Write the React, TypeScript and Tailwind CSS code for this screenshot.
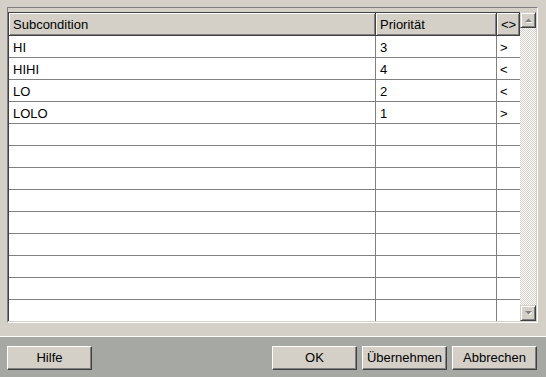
import React from "react";

const rows: [string, string, string][] = [
  ["HI", "3", ">"],
  ["HIHI", "4", "<"],
  ["LO", "2", "<"],
  ["LOLO", "1", ">"],
  ...Array.from({ length: 9 }, () => ["", "", ""] as [string, string, string]),
];

function ScrollButton({ down }: { down?: boolean }) {
  return (
    <div className="h-[16px] w-[16px] flex items-center justify-center bg-[#d4d0c8] border border-t-[#d4d0c8] border-l-[#d4d0c8] border-r-[#404040] border-b-[#404040] shadow-[inset_1px_1px_#ffffff,inset_-1px_-1px_#808080]">
      <svg width="7" height="5" viewBox="0 0 7 5">
        {down ? (
          <>
            <polygon points="1,1 8,1 4.5,4.5" fill="#ffffff" />
            <polygon points="0,0 7,0 3.5,3.5" fill="#808080" />
          </>
        ) : (
          <>
            <polygon points="1,5 8,5 4.5,1.5" fill="#ffffff" />
            <polygon points="0,4 7,4 3.5,0.5" fill="#808080" />
          </>
        )}
      </svg>
    </div>
  );
}

function Button({ label }: { label: string }) {
  return (
    <button className="h-[24px] w-[85px] bg-[#d4d0c8] border border-t-white border-l-white border-r-[#404040] border-b-[#404040] shadow-[inset_-1px_-1px_#808080] text-[13px] leading-[20px] text-black">
      {label}
    </button>
  );
}

export default function App() {
  return (
    <div className="w-[546px] h-[377px] bg-[#d4d0c8] flex flex-col font-['Liberation_Sans',Arial,sans-serif] text-[13px] text-black overflow-hidden">
      {/* table area */}
      <div className="pt-[7px] pl-[7px] pr-[8px] pb-[13px]">
        <div className="h-[316px] border border-t-[#808080] border-l-[#808080] border-r-white border-b-white">
          <div className="h-full border-r border-b border-r-[#d4d0c8] border-b-[#d4d0c8] pt-[4px]">
            <div className="flex h-full border-l border-[#404040]">
              <div className="flex flex-col w-[511px]">
                {/* header */}
                <div className="flex h-[24px] shrink-0">
                  <div className="w-[367px] border-t border-r border-b border-[#404040] bg-[#d4d0c8] shadow-[inset_1px_1px_#ffffff,inset_-1px_-1px_#808080] pl-[4px] pt-[2px] leading-[20px]">
                    Subcondition
                  </div>
                  <div className="w-[121px] border-t border-r border-b border-[#404040] bg-[#d4d0c8] shadow-[inset_1px_1px_#ffffff,inset_-1px_-1px_#808080] pl-[4px] pt-[2px] leading-[20px]">
                    Priorität
                  </div>
                  <div className="w-[23px] border-t border-r border-b border-[#404040] bg-[#d4d0c8] shadow-[inset_1px_1px_#ffffff,inset_-1px_-1px_#808080] pl-[4px] pt-[2px] leading-[20px]">
                    &lt;&gt;
                  </div>
                </div>
                {/* rows */}
                <div className="flex-1 overflow-hidden bg-white">
                  {rows.map((r, i) => (
                    <div key={i} className="flex h-[22px] border-b border-[#808080]">
                      <div className="w-[367px] border-r border-[#808080] pl-[4px] pt-[2px] leading-[20px]">{r[0]}</div>
                      <div className="w-[121px] border-r border-[#808080] pl-[4px] pt-[2px] leading-[20px]">{r[1]}</div>
                      <div className="w-[23px] pl-[3px] pt-[2px] leading-[20px]">{r[2]}</div>
                    </div>
                  ))}
                </div>
              </div>
              {/* scrollbar */}
              <div className="w-[16px] flex flex-col bg-[repeating-conic-gradient(#ffffff_0_25%,#d4d0c8_0_50%)] bg-[length:2px_2px]">
                <ScrollButton />
                <div className="flex-1" />
                <ScrollButton down />
              </div>
            </div>
          </div>
        </div>
      </div>

      {/* button bar */}
      <div className="flex-1 border-t border-white bg-[#a6a8a4] flex items-start pt-[9px] pl-[7px] pr-[9px]">
        <Button label="Hilfe" />
        <div className="flex-1" />
        <div className="flex gap-[5px]">
          <Button label="OK" />
          <Button label="Übernehmen" />
          <Button label="Abbrechen" />
        </div>
      </div>
    </div>
  );
}
